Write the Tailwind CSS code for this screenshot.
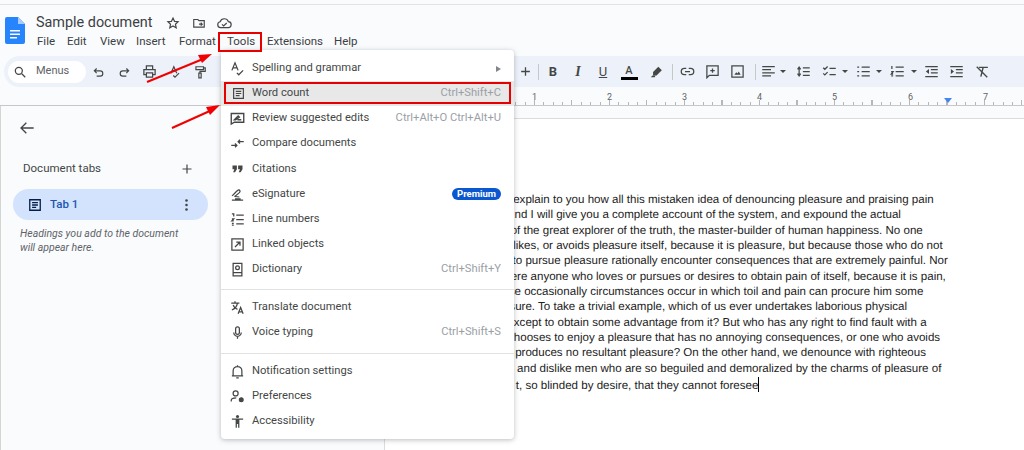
<!DOCTYPE html>
<html lang="en">
<head>
  <meta charset="UTF-8" />
  <title>Sample document</title>
  <script src="https://cdn.jsdelivr.net/npm/@tailwindcss/browser@4"></script>
</head>
<body class="w-[1024px] h-[450px] overflow-hidden bg-[#f9fbfd] font-['Roboto',sans-serif] text-[#444746] relative">
  <!-- header -->
  <div class="h-[52px] border-t border-[#e3e3e3] mt-[4px] flex">
    <svg class="w-[20px] h-[27px] ml-[5px] mt-[12px]" viewBox="0 0 20 27">
      <path d="M2 0h11l7 7v18a2 2 0 0 1-2 2H2a2 2 0 0 1-2-2V2a2 2 0 0 1 2-2z" fill="#2684fc"/>
      <path d="M13 0l7 7h-7z" fill="#a9cbfb"/>
      <path d="M5 13h10v1.500H5zM5 16.500h10V18H5zM5 20h7v1.500H5z" fill="#fff"/>
    </svg>
    <div class="ml-[11px]">
      <div class="flex items-center h-[24px] mt-[6px]">
        <span class="text-[14.400px] leading-[24px] text-[#3c4043]">Sample document</span>
        <svg class="w-[14px] h-[14px] ml-[14px]" viewBox="0 0 24 24" fill="none" stroke="#444746" stroke-width="2"><path d="M12 3.500l2.600 5.700 6.200.7-4.600 4.200 1.300 6.100-5.500-3.100-5.500 3.100 1.300-6.100-4.600-4.200 6.200-.7z"/></svg>
        <svg class="w-[14px] h-[14px] ml-[12px]" viewBox="0 0 24 24" fill="none" stroke="#444746" stroke-width="2"><path d="M3 6h7l2 2h9v11H3z"/><path d="M12 14h5M15 11.500l2.500 2.500-2.500 2.500"/></svg>
        <svg class="w-[16px] h-[16px] ml-[10px]" viewBox="0 0 24 24" fill="none" stroke="#444746" stroke-width="1.800"><path d="M7 19a4.500 4.500 0 0 1-.8-8.900A6.500 6.500 0 0 1 18.500 10a4.500 4.500 0 0 1-.5 9z"/><path d="M9 14l2.500 2.500L16 12"/></svg>
      </div>
      <div class="flex text-[11.500px] leading-[16px] text-[#3c4043] -mt-[2px] ml-[1px]">
        <span class="w-[30px]">File</span>
        <span class="w-[33px]">Edit</span>
        <span class="w-[36px]">View</span>
        <span class="w-[43px]">Insert</span>
        <span class="w-[48px]">Format</span>
        <span class="w-[40px]">Tools</span>
        <span class="w-[67px]">Extensions</span>
        <span>Help</span>
      </div>
    </div>
  </div>

  <!-- toolbar -->
  <div class="h-[31px] w-[1040px] ml-[4px] bg-[#edf2fa] rounded-full flex items-center text-[#444746]">
    <div class="w-[78px] h-[22px] ml-[4px] bg-white rounded-full flex items-center">
      <svg class="w-[14px] h-[14px] ml-[5px]" viewBox="0 0 24 24" fill="none" stroke="#444746" stroke-width="2.200"><circle cx="10" cy="10" r="6"/><path d="M15 15l6 6"/></svg>
      <span class="text-[11px] ml-[9px] text-[#5f6368]">Menus</span>
    </div>
    <div class="flex items-center gap-[11px] ml-[6px]">
      <svg class="w-[14px] h-[14px]" viewBox="0 0 24 24" fill="none" stroke="#444746" stroke-width="2"><path d="M8 6L4 10l4 4M4 10h10a4.500 4.500 0 0 1 0 9H8"/></svg>
      <svg class="w-[14px] h-[14px]" viewBox="0 0 24 24" fill="none" stroke="#444746" stroke-width="2"><path d="M16 6l4 4-4 4M20 10H10a4.500 4.500 0 0 0 0 9h6"/></svg>
      <svg class="w-[15px] h-[15px]" viewBox="0 0 24 24" fill="none" stroke="#444746" stroke-width="2"><path d="M7 8V3h10v5M7 17H3V9h18v8h-4M7 14h10v7H7z"/></svg>
      <svg class="w-[14px] h-[14px]" viewBox="0 0 24 24" fill="none" stroke="#444746" stroke-width="2"><path d="M5 14L10 3l5 11M7 10h6M9 18l3 3 7-7"/></svg>
      <svg class="w-[14px] h-[14px]" viewBox="0 0 24 24" fill="none" stroke="#444746" stroke-width="2"><path d="M5 3h13v5H5zM18 5h3v6h-9v3M10 14h4v8h-4z"/></svg>
    </div>
    <div class="flex items-center ml-[311.500px] h-[20px]">
      <svg class="w-[13px] h-[13px]" viewBox="0 0 24 24" stroke="#444746" stroke-width="2.400"><path d="M12 4v16M4 12h16"/></svg>
      <span class="w-px h-[16px] bg-[#c7c7c7] ml-[6.500px]"></span>
      <span class="font-bold text-[13px] w-[26px] text-center ml-[1px]">B</span>
      <span class="italic font-['Liberation_Serif',serif] font-bold text-[14px] w-[24px] text-center">I</span>
      <span class="underline text-[13px] w-[26px] text-center">U</span>
      <span class="flex flex-col items-center w-[20px] ml-[3px]">
        <span class="text-[11px] leading-[13px] font-medium">A</span>
        <span class="w-[17px] h-[3px] bg-black"></span>
      </span>
      <svg class="w-[14px] h-[14px] ml-[10px]" viewBox="0 0 24 24" fill="#444746"><path d="M16 3l6 6-9 9H7v-6z"/><path d="M3 21l3-3h5l-1 3z"/></svg>
      <span class="w-px h-[16px] bg-[#c7c7c7] ml-[9px]"></span>
      <svg class="w-[15px] h-[15px] ml-[7px]" viewBox="0 0 24 24" fill="none" stroke="#444746" stroke-width="2"><path d="M10 7H7a5 5 0 0 0 0 10h3M14 7h3a5 5 0 0 1 0 10h-3M8 12h8"/></svg>
      <svg class="w-[15px] h-[15px] ml-[10px]" viewBox="0 0 24 24" fill="none" stroke="#444746" stroke-width="2"><path d="M3 3h18v15H7l-4 4zM12 7v7M8.500 10.500h7"/></svg>
      <svg class="w-[15px] h-[15px] ml-[10px]" viewBox="0 0 24 24" fill="none" stroke="#444746" stroke-width="2"><path d="M3 3h18v18H3z"/><path d="M7 17l3-4 2 2 2-3 3 5z" fill="#444746" stroke="none"/></svg>
      <span class="w-px h-[16px] bg-[#c7c7c7] ml-[9.500px]"></span>
      <svg class="w-[15px] h-[15px] ml-[5px]" viewBox="0 0 24 24" stroke="#444746" stroke-width="2"><path d="M2 4h20M2 9h14M2 14h20M2 19h14"/></svg>
      <span class="w-0 h-0 border-x-[3px] border-t-[3px] border-x-transparent border-t-[#444746] ml-[4px]"></span>
      <svg class="w-[15px] h-[15px] ml-[10px]" viewBox="0 0 24 24" fill="none" stroke="#444746" stroke-width="2"><path d="M5 6v12M2.500 8.500L5 5l2.500 3.500M2.500 15.500L5 19l2.500-3.500M11 6h11M11 12h11M11 18h11"/></svg>
      <svg class="w-[15px] h-[15px] ml-[11px]" viewBox="0 0 24 24" fill="none" stroke="#444746" stroke-width="2"><path d="M2 6l2.500 2.500L9 4M2 15l2.500 2.500L9 13M12 7h10M12 17h10"/></svg>
      <span class="w-0 h-0 border-x-[3px] border-t-[3px] border-x-transparent border-t-[#444746] ml-[5px]"></span>
      <svg class="w-[15px] h-[15px] ml-[8px]" viewBox="0 0 24 24" stroke="#444746" stroke-width="2"><path d="M9 5h13M9 12h13M9 19h13M2 5h3M2 12h3M2 19h3"/></svg>
      <span class="w-0 h-0 border-x-[3px] border-t-[3px] border-x-transparent border-t-[#444746] ml-[5px]"></span>
      <svg class="w-[15px] h-[15px] ml-[8.500px]" viewBox="0 0 24 24" stroke="#444746" stroke-width="2"><path d="M9 5h13M9 12h13M9 19h13M3 3v5M2 12h3l-3 4h3M2 19h3"/></svg>
      <span class="w-0 h-0 border-x-[3px] border-t-[3px] border-x-transparent border-t-[#444746] ml-[5.500px]"></span>
      <svg class="w-[15px] h-[15px] ml-[7.500px]" viewBox="0 0 24 24" stroke="#444746" stroke-width="2"><path d="M2 4h20M11 9h11M11 14h11M2 20h20"/><path d="M8 8v8l-5-4z" fill="#444746" stroke="none"/></svg>
      <svg class="w-[15px] h-[15px] ml-[10px]" viewBox="0 0 24 24" stroke="#444746" stroke-width="2"><path d="M2 4h20M11 9h11M11 14h11M2 20h20"/><path d="M3 8v8l5-4z" fill="#444746" stroke="none"/></svg>
      <svg class="w-[14px] h-[14px] ml-[10.500px]" viewBox="0 0 24 24" fill="none" stroke="#444746" stroke-width="2.400"><path d="M7 4h15M14 4l-4 16M3 3l18 18"/></svg>
    </div>
  </div>

  <!-- ruler -->
  <div class="relative h-[19px] border-b border-[#c7c7c7] text-[9px] leading-[10px] text-[#5f6368]">
    <span class="absolute left-[532px] top-[5px]">1</span>
    <span class="absolute left-[607px] top-[5px]">2</span>
    <span class="absolute left-[682px] top-[5px]">3</span>
    <span class="absolute left-[757px] top-[5px]">4</span>
    <span class="absolute left-[832px] top-[5px]">5</span>
    <span class="absolute left-[908px] top-[5px]">6</span>
    <span class="absolute left-[983px] top-[5px]">7</span>
    <div class="absolute left-[384px] right-0 bottom-0 h-[3px] bg-[repeating-linear-gradient(90deg,#b5b8bb_0,#b5b8bb_1px,transparent_1px,transparent_9.375px)]"></div>
    <div class="absolute left-[384px] right-0 bottom-0 h-[5px] bg-[repeating-linear-gradient(90deg,#b5b8bb_0,#b5b8bb_1px,transparent_1px,transparent_37.500px)]"></div>
    <span class="absolute left-[944px] top-[11px] w-0 h-0 border-x-[4px] border-t-[5px] border-x-transparent border-t-[#4285f4]"></span>
  </div>

  <!-- side panel and page -->
  <div class="flex h-[344px]">
    <div class="w-[384px] shrink-0 border-l border-[#d5d5d5] pt-[14px]">
      <svg class="w-[16px] h-[16px] ml-[18px]" viewBox="0 0 24 24" fill="none" stroke="#444746" stroke-width="2"><path d="M22 12H3M11 4l-8 8 8 8"/></svg>
      <div class="flex items-center justify-between w-[220px] h-[20px] mt-[23px] pl-[22px] pr-[28px]">
        <span class="text-[11.500px] text-[#444746]">Document tabs</span>
        <svg class="w-[12px] h-[12px]" viewBox="0 0 24 24" stroke="#444746" stroke-width="2.400"><path d="M12 3v18M3 12h18"/></svg>
      </div>
      <div class="w-[195px] h-[31px] ml-[12px] mt-[10px] bg-[#d3e3fd] rounded-full flex items-center">
        <svg class="w-[14px] h-[14px] ml-[15px]" viewBox="0 0 24 24" fill="none" stroke="#041e49" stroke-width="2.200"><path d="M3 3h18v18H3zM7 8h10M7 12h10M7 16h7"/></svg>
        <span class="text-[11.500px] ml-[8px] text-[#1a56b0] font-medium">Tab 1</span>
        <svg class="w-[3px] h-[12px] ml-auto mr-[20px]" viewBox="0 0 3 12" fill="#444746"><circle cx="1.500" cy="1.500" r="1.300"/><circle cx="1.500" cy="6" r="1.300"/><circle cx="1.500" cy="10.500" r="1.300"/></svg>
      </div>
      <p class="ml-[19px] mt-[6.500px] w-[170px] text-[10.500px] leading-[14px] italic text-[#5f6368]">Headings you add to the document will appear here.</p>
    </div>

    <!-- what the menu covers stays in the flow as invisible text -->
    <div class="flex-1 min-w-0 mt-[12px] bg-white border-l border-t border-[#dadce0] pl-[73px] pt-[74px]">
      <div class="text-[11.550px] leading-[15.330px] text-[#222] font-['Liberation_Sans',sans-serif] whitespace-nowrap [text-rendering:geometricPrecision]">
        <div><span class="invisible">But I must </span>explain to you how all this mistaken idea of denouncing pleasure and praising pain</div>
        <div><span class="invisible">was born a</span>nd I will give you a complete account of the system, and expound the actual</div>
        <div><span class="invisible">teachings </span>of the great explorer of the truth, the master-builder of human happiness. No one</div>
        <div><span class="invisible">rejects, dis</span>likes, or avoids pleasure itself, because it is pleasure, but because those who do not</div>
        <div><span class="invisible">know how </span>to pursue pleasure rationally encounter consequences that are extremely painful. Nor</div>
        <div><span class="invisible">again is th</span>ere anyone who loves or pursues or desires to obtain pain of itself, because it is pain,</div>
        <div><span class="invisible">but becau</span>se occasionally circumstances occur in which toil and pain can procure him some</div>
        <div><span class="invisible">great plea</span>sure. To take a trivial example, which of us ever undertakes laborious physical</div>
        <div><span class="invisible">exercise, e</span>xcept to obtain some advantage from it? But who has any right to find fault with a</div>
        <div><span class="invisible">man who c</span>hooses to enjoy a pleasure that has no annoying consequences, or one who avoids</div>
        <div><span class="invisible">a pain that </span>produces no resultant pleasure? On the other hand, we denounce with righteous</div>
        <div><span class="invisible">indignation </span>and dislike men who are so beguiled and demoralized by the charms of pleasure of</div>
        <div><span class="invisible">the momen</span>t, so blinded by desire, that they cannot foresee<span class="w-px h-[15px] bg-black inline-block align-[-3px]"></span></div>
      </div>
    </div>
  </div>

  <!-- tools menu -->
  <div class="absolute left-[221px] top-[50px] w-[293px] h-[389px] bg-white rounded-[4px] shadow-[0_1px_5px_rgba(60,64,67,0.35)] pt-[6px] text-[11.200px] text-[#444746]">
    <div class="h-[25.100px] flex items-center pl-[9px] pr-[13px]">
      <svg class="w-[15px] h-[15px]" viewBox="0 0 24 24" fill="none" stroke="#444746" stroke-width="2"><path d="M3 15L8 3l5 12M5 11h6M11 19l3 3 7-7"/></svg>
      <span class="ml-[7px]">Spelling and grammar</span>
      <span class="ml-auto w-0 h-0 border-y-[3px] border-l-[5px] border-y-transparent border-l-[#80868b]"></span>
    </div>
    <div class="h-[25.100px] flex items-center pl-[11px] pr-[13px] bg-[#e8e8e8]">
      <svg class="w-[13px] h-[13px]" viewBox="0 0 24 24" fill="none" stroke="#444746" stroke-width="2.200"><path d="M3 3h18v18H3zM7 8h10M7 12h10M7 16h7"/></svg>
      <span class="ml-[7px]">Word count</span>
      <span class="ml-auto text-[#9aa0a6]">Ctrl+Shift+C</span>
    </div>
    <div class="h-[25.100px] flex items-center pl-[9px] pr-[13px]">
      <svg class="w-[15px] h-[15px]" viewBox="0 0 24 24" fill="none" stroke="#444746" stroke-width="2.200"><path d="M2 4h20v14H7l-5 3z"/><path d="M7 14l6-6 2 2-6 4zM12 14h6"/></svg>
      <span class="ml-[7px]">Review suggested edits</span>
      <span class="ml-auto text-[#9aa0a6]">Ctrl+Alt+O Ctrl+Alt+U</span>
    </div>
    <div class="h-[25.100px] flex items-center pl-[9px] pr-[13px]">
      <svg class="w-[15px] h-[15px]" viewBox="0 0 24 24" fill="none" stroke="#444746" stroke-width="2"><path d="M2 15h9M8 12l3 3-3 3M22 9h-9M16 6l-3 3 3 3"/></svg>
      <span class="ml-[7px]">Compare documents</span>
    </div>
    <div class="h-[25.100px] flex items-center pl-[9px] pr-[13px]">
      <svg class="w-[15px] h-[15px]" viewBox="0 0 24 24" fill="#444746"><path d="M4 7h7v6l-3 5H5l2-5H4zM13 7h7v6l-3 5h-3l2-5h-3z"/></svg>
      <span class="ml-[7px]">Citations</span>
    </div>
    <div class="h-[25.100px] flex items-center pl-[9px] pr-[13px]">
      <svg class="w-[15px] h-[15px]" viewBox="0 0 24 24" fill="none" stroke="#444746" stroke-width="2"><path d="M3 14c3-1 6-7 10-9 3-1 4 2 2 4l-7 6M7 15l8 1M3 21h18M8 19h9"/></svg>
      <span class="ml-[7px]">eSignature</span>
      <span class="ml-auto bg-[#0b57d0] text-white text-[9.500px] leading-[12px] font-bold rounded-full px-[5px]">Premium</span>
    </div>
    <div class="h-[25.100px] flex items-center pl-[9px] pr-[13px]">
      <svg class="w-[15px] h-[15px]" viewBox="0 0 24 24" stroke="#444746" stroke-width="2" fill="none"><path d="M10 5h12M10 12h12M10 19h12M3 3h3v4M3 11h3l-3 3h3M3 18h3M3 21h3"/></svg>
      <span class="ml-[7px]">Line numbers</span>
    </div>
    <div class="h-[25.100px] flex items-center pl-[9px] pr-[13px]">
      <svg class="w-[15px] h-[15px]" viewBox="0 0 24 24" fill="none" stroke="#444746" stroke-width="2"><path d="M3 3h18v18H3zM8 16l8-8M10 8h6v6"/></svg>
      <span class="ml-[7px]">Linked objects</span>
    </div>
    <div class="h-[25.100px] flex items-center pl-[9px] pr-[13px]">
      <svg class="w-[15px] h-[15px]" viewBox="0 0 24 24" fill="none" stroke="#444746" stroke-width="2"><path d="M5 2h14v20H5zM5 17h14"/><circle cx="12" cy="9" r="3"/></svg>
      <span class="ml-[7px]">Dictionary</span>
      <span class="ml-auto text-[#9aa0a6]">Ctrl+Shift+Y</span>
    </div>
    <div class="h-px bg-[#e3e3e3] mt-[7px] mb-[5px]"></div>
    <div class="h-[25.100px] flex items-center pl-[9px] pr-[13px]">
      <svg class="w-[15px] h-[15px]" viewBox="0 0 24 24" fill="none" stroke="#444746" stroke-width="2"><path d="M2 5h13M8 2v3M12 5c-1 5-4 9-9 11M5 8c1 3 4 6 7 7M13 22l4-10 4 10M14.500 19h5"/></svg>
      <span class="ml-[7px]">Translate document</span>
    </div>
    <div class="h-[25.100px] flex items-center pl-[9px] pr-[13px]">
      <svg class="w-[15px] h-[15px]" viewBox="0 0 24 24" fill="none" stroke="#444746" stroke-width="2"><rect x="9" y="3" width="6" height="12" rx="3"/><path d="M6 12a6 6 0 0 0 12 0M12 18v4"/></svg>
      <span class="ml-[7px]">Voice typing</span>
      <span class="ml-auto text-[#9aa0a6]">Ctrl+Shift+S</span>
    </div>
    <div class="h-px bg-[#e3e3e3] mt-[8px] mb-[5px]"></div>
    <div class="h-[25.100px] flex items-center pl-[9px] pr-[13px]">
      <svg class="w-[15px] h-[15px]" viewBox="0 0 24 24" fill="none" stroke="#444746" stroke-width="2"><path d="M5 19v-8a7 7 0 0 1 14 0v8zM3 19h18M12 2v2M10 22h4"/></svg>
      <span class="ml-[7px]">Notification settings</span>
    </div>
    <div class="h-[25.100px] flex items-center pl-[9px] pr-[13px]">
      <svg class="w-[15px] h-[15px]" viewBox="0 0 24 24" fill="none" stroke="#444746" stroke-width="2"><circle cx="9" cy="7" r="4"/><path d="M2 20v-2c0-3 4-4 8-4"/><circle cx="18" cy="17" r="3" fill="#444746"/></svg>
      <span class="ml-[7px]">Preferences</span>
    </div>
    <div class="h-[25.100px] flex items-center pl-[9px] pr-[13px]">
      <svg class="w-[15px] h-[15px]" viewBox="0 0 24 24" fill="#444746"><circle cx="12" cy="4" r="2.500"/><path d="M3 7h18v2h-6v13h-2v-6h-2v6H9V9H3z"/></svg>
      <span class="ml-[7px]">Accessibility</span>
    </div>
  </div>

  <!-- annotations -->
  <div class="absolute left-[218px] top-[32px] w-[44px] h-[20px] border-2 border-[#e60000]"></div>
  <div class="absolute left-[224px] top-[82px] w-[287px] h-[21.500px] border-2 border-[#e60000]"></div>
  <svg class="absolute left-0 top-0 w-[1024px] h-[450px] pointer-events-none" viewBox="0 0 1024 450" fill="none">
    <path d="M147 82L203 59" stroke="#f00000" stroke-width="2"/>
    <path d="M212 54L198 55L202 63z" fill="#f00000"/>
    <path d="M172 128L212 110" stroke="#f00000" stroke-width="2"/>
    <path d="M220 105L206 107L210 115z" fill="#f00000"/>
  </svg>
</body>
</html>
